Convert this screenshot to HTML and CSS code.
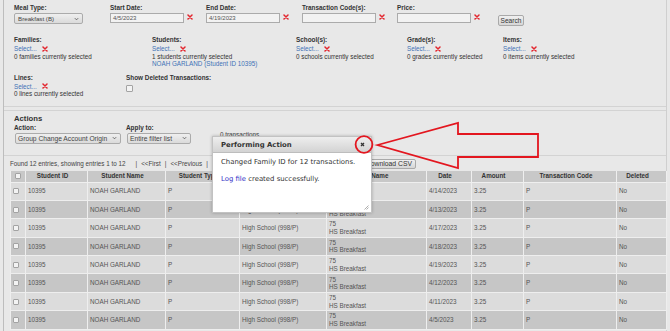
FILE: index.html
```html
<!DOCTYPE html>
<html>
<head>
<meta charset="utf-8">
<title>Transactions</title>
<link rel="stylesheet" href="styles.css">
</head>
<body>
<div class="page">
  <section class="filters">
    <div class="frow frow1">
      <div class="field">
        <div class="lbl">Meal Type:</div>
        <div class="sel sel-meal"><span>Breakfast (B)</span><svg class="chev" viewBox="0 0 6 4"><path d="M1 1l2 2 2-2" fill="none" stroke="#555" stroke-width="1"/></svg></div>
      </div>
      <div class="field">
        <div class="lbl">Start Date:</div>
        <div class="inrow"><div class="inp">4/5/2023</div><svg class="xi" viewBox="0 0 6 6"><path d="M1 1L5 5M5 1L1 5"/></svg></div>
      </div>
      <div class="field">
        <div class="lbl">End Date:</div>
        <div class="inrow"><div class="inp">4/19/2023</div><svg class="xi" viewBox="0 0 6 6"><path d="M1 1L5 5M5 1L1 5"/></svg></div>
      </div>
      <div class="field">
        <div class="lbl">Transaction Code(s):</div>
        <div class="inrow"><div class="inp"></div><svg class="xi" viewBox="0 0 6 6"><path d="M1 1L5 5M5 1L1 5"/></svg></div>
      </div>
      <div class="field">
        <div class="lbl">Price:</div>
        <div class="inrow"><div class="inp"></div><svg class="xi" viewBox="0 0 6 6"><path d="M1 1L5 5M5 1L1 5"/></svg></div>
      </div>
      <div class="field field-search"><button class="btn btn-search">Search</button></div>
    </div>

    <div class="frow frow2">
      <div class="field">
        <div class="lbl">Families:</div>
        <div class="selrow"><span class="link">Select...</span><svg class="xi" viewBox="0 0 6 6"><path d="M1 1L5 5M5 1L1 5"/></svg></div>
        <div class="txt">0 families currently selected</div>
      </div>
      <div class="field">
        <div class="lbl">Students:</div>
        <div class="selrow"><span class="link">Select...</span><svg class="xi" viewBox="0 0 6 6"><path d="M1 1L5 5M5 1L1 5"/></svg></div>
        <div class="txt">1 students currently selected</div>
        <div class="txt txt-link">NOAH GARLAND (Student ID 10395)</div>
      </div>
      <div class="field">
        <div class="lbl">School(s):</div>
        <div class="selrow"><span class="link">Select...</span><svg class="xi" viewBox="0 0 6 6"><path d="M1 1L5 5M5 1L1 5"/></svg></div>
        <div class="txt">0 schools currently selected</div>
      </div>
      <div class="field">
        <div class="lbl">Grade(s):</div>
        <div class="selrow"><span class="link">Select...</span><svg class="xi" viewBox="0 0 6 6"><path d="M1 1L5 5M5 1L1 5"/></svg></div>
        <div class="txt">0 grades currently selected</div>
      </div>
      <div class="field">
        <div class="lbl">Items:</div>
        <div class="selrow"><span class="link">Select...</span><svg class="xi" viewBox="0 0 6 6"><path d="M1 1L5 5M5 1L1 5"/></svg></div>
        <div class="txt">0 items currently selected</div>
      </div>
    </div>

    <div class="frow frow3">
      <div class="field">
        <div class="lbl">Lines:</div>
        <div class="selrow"><span class="link">Select...</span><svg class="xi" viewBox="0 0 6 6"><path d="M1 1L5 5M5 1L1 5"/></svg></div>
        <div class="txt">0 lines currently selected</div>
      </div>
      <div class="field">
        <div class="lbl">Show Deleted Transactions:</div>
        <div class="cbx cbx-deleted"></div>
      </div>
    </div>
  </section>

  <section class="actions">
    <div class="act-title">Actions</div>
    <div class="act-row">
      <div class="field">
        <div class="lbl lbl-act">Action:</div>
        <div class="sel sel-act sel-action"><span>Group Change Account Origin</span><svg class="chev" viewBox="0 0 6 4"><path d="M1 1l2 2 2-2" fill="none" stroke="#555" stroke-width="1"/></svg></div>
      </div>
      <div class="field">
        <div class="lbl lbl-act">Apply to:</div>
        <div class="sel sel-act sel-apply"><span>Entire filter list</span><svg class="chev" viewBox="0 0 6 4"><path d="M1 1l2 2 2-2" fill="none" stroke="#555" stroke-width="1"/></svg></div>
      </div>
      <div class="field field-count">0 transactions</div>
    </div>
  </section>

  <div class="pager">
    <span>Found 12 entries, showing entries 1 to 12</span>
    <span class="sep sep-first">|</span>
    <span>&lt;&lt;First</span>
    <span class="sep">|</span>
    <span>&lt;&lt;Previous</span>
    <span class="sep">|</span>
    <button class="btn btn-csv">Download CSV</button>
  </div>

  <table class="grid">
    <colgroup>
      <col class="c-cb"><col class="c-id"><col class="c-name"><col class="c-type"><col class="c-school"><col class="c-item"><col class="c-date"><col class="c-amt"><col class="c-code"><col class="c-del">
    </colgroup>
    <thead>
      <tr><th class="th-cb"><div class="cbx"></div></th><th>Student ID</th><th>Student Name</th><th>Student Type</th><th>School</th><th>Item Name</th><th>Date</th><th>Amount</th><th>Transaction Code</th><th>Deleted</th></tr>
    </thead>
    <tbody>
      <tr class="r-odd"><td><div class="cbx"></div></td><td>10395</td><td>NOAH GARLAND</td><td>P</td><td>High School (998/P)</td><td>75<br>HS Breakfast</td><td>4/14/2023</td><td>3.25</td><td>P</td><td>No</td></tr>
      <tr class="r-even"><td><div class="cbx"></div></td><td>10395</td><td>NOAH GARLAND</td><td>P</td><td>High School (998/P)</td><td>75<br>HS Breakfast</td><td>4/13/2023</td><td>3.25</td><td>P</td><td>No</td></tr>
      <tr class="r-odd"><td><div class="cbx"></div></td><td>10395</td><td>NOAH GARLAND</td><td>P</td><td>High School (998/P)</td><td>75<br>HS Breakfast</td><td>4/17/2023</td><td>3.25</td><td>P</td><td>No</td></tr>
      <tr class="r-even"><td><div class="cbx"></div></td><td>10395</td><td>NOAH GARLAND</td><td>P</td><td>High School (998/P)</td><td>75<br>HS Breakfast</td><td>4/18/2023</td><td>3.25</td><td>P</td><td>No</td></tr>
      <tr class="r-odd"><td><div class="cbx"></div></td><td>10395</td><td>NOAH GARLAND</td><td>P</td><td>High School (998/P)</td><td>75<br>HS Breakfast</td><td>4/19/2023</td><td>3.25</td><td>P</td><td>No</td></tr>
      <tr class="r-even"><td><div class="cbx"></div></td><td>10395</td><td>NOAH GARLAND</td><td>P</td><td>High School (998/P)</td><td>75<br>HS Breakfast</td><td>4/12/2023</td><td>3.25</td><td>P</td><td>No</td></tr>
      <tr class="r-odd"><td><div class="cbx"></div></td><td>10395</td><td>NOAH GARLAND</td><td>P</td><td>High School (998/P)</td><td>75<br>HS Breakfast</td><td>4/11/2023</td><td>3.25</td><td>P</td><td>No</td></tr>
      <tr class="r-even"><td><div class="cbx"></div></td><td>10395</td><td>NOAH GARLAND</td><td>P</td><td>High School (998/P)</td><td>75<br>HS Breakfast</td><td>4/5/2023</td><td>3.25</td><td>P</td><td>No</td></tr>
    </tbody>
  </table>
</div>

<div class="dialog">
  <div class="dlg-title">
    <span>Performing Action</span>
    <svg class="dlg-close" viewBox="0 0 5 5"><path d="M1 1L4 4M4 1L1 4"/></svg>
  </div>
  <div class="dlg-body">
    <p class="dlg-line1">Changed Family ID for 12 transactions.</p>
    <p class="dlg-line2"><span class="dlg-link">Log file</span> created successfully.</p>
  </div>
  <svg class="dlg-grip" viewBox="0 0 6 6"><path d="M5.5 1.5L1.5 5.5M5.5 3.5L3.5 5.5"/></svg>
</div>

<svg class="annot" viewBox="0 0 670 331" width="670" height="331">
  <circle cx="364" cy="144.5" r="8.4"/>
  <polygon points="377.5,145 458,123 458,134 538,134 538,157 458,157 458,168"/>
</svg>
</body>
</html>
```

FILE: styles.css
```css
* { box-sizing: border-box; }

html, body {
  margin: 0;
  padding: 0;
  height: 100%;
  overflow: hidden;
}

body {
  position: relative;
  background: #e8e8e8;
  font-family: "Liberation Sans", Arial, sans-serif;
  font-size: 6.3px;
  color: #333;
}

.page {
  margin-left: 3px;
  width: 664px;
  min-height: 100%;
  border-left: 1px solid #bdbdbd;
  border-right: 1px solid #cfcfcf;
}

/* ---------- filters ---------- */
.filters {
  height: 107px;
  padding: 4px 0 0 10px;
  border-bottom: 1px solid #d3d3d3;
}

.frow { display: grid; align-items: start; }
.frow1 { grid-template-columns: 96px 96px 96px 95px 101px auto; }
.frow2 { grid-template-columns: 138px 144px 111px 96px auto; margin-top: 10px; }
.frow3 { grid-template-columns: 112px auto; margin-top: 6px; }

.lbl {
  font-weight: bold;
  font-size: 6.4px;
  line-height: 8px;
  color: #333;
  white-space: nowrap;
}

.inrow {
  display: flex;
  align-items: flex-start;
  gap: 3px;
  margin-top: 1px;
}

.inp {
  width: 74px;
  height: 10px;
  border: 1px solid #ababab;
  background: #f2f2f2;
  font-size: 6px;
  line-height: 8px;
  padding-left: 2px;
  color: #555;
}

.xi {
  width: 6px;
  height: 6px;
  flex: none;
  fill: none;
  stroke: #e3262e;
  stroke-width: 1.5;
  stroke-linecap: round;
}
.inrow .xi { margin-top: 1px; }

.sel {
  display: flex;
  align-items: center;
  justify-content: space-between;
  height: 11px;
  margin-top: 1px;
  padding: 0 3px 0 3px;
  border: 1px solid #ababab;
  border-radius: 2px;
  background: linear-gradient(#efefef, #dadada);
  color: #444;
  font-size: 6.2px;
  white-space: nowrap;
}
.sel-meal { width: 69px; }
.chev { width: 5px; height: 4px; flex: none; }

.field-search { padding-top: 11px; }

.btn {
  font-family: "Liberation Sans", Arial, sans-serif;
  color: #333;
  border: 1px solid #a9a9a9;
  border-radius: 2px;
  background: linear-gradient(#f0f0f0, #d6d6d6);
  padding: 0;
  margin: 0;
  cursor: pointer;
}
.btn-search {
  width: 26px;
  height: 11px;
  font-size: 6.6px;
  line-height: 9px;
}

.selrow {
  display: flex;
  align-items: center;
  gap: 5px;
  height: 8px;
  margin-top: 0.5px;
}

.link { color: #3d72b6; }

.txt {
  line-height: 7.7px;
  white-space: nowrap;
  color: #333;
}
.txt-link { color: #3d72b6; }

.cbx {
  width: 6px;
  height: 6px;
  border: 1px solid #a3a3a3;
  border-radius: 1px;
  background: #f3f3f3;
}
.cbx-deleted { width: 7px; height: 7px; margin-top: 3px; }

/* ---------- actions ---------- */
.actions {
  height: 46px;
  margin-top: 3px;
  padding: 3px 0 0 10px;
  border-top: 1px solid #d3d3d3;
  border-bottom: 1px solid #d3d3d3;
}

.act-title {
  font-weight: bold;
  font-size: 7.7px;
  line-height: 9px;
  color: #333;
}

.act-row {
  display: grid;
  grid-template-columns: 112px 94px auto;
  align-items: start;
}

.lbl-act { line-height: 9.5px; }

.sel-act {
  margin-top: 0;
  font-size: 6.7px;
  padding: 0 3px 0 2px;
}
.sel-action { width: 106px; margin-left: 1px; }
.sel-apply { width: 64px; margin-left: 1px; }

.field-count {
  padding-top: 8px;
  line-height: 8px;
  color: #444;
}

/* ---------- pager ---------- */
.pager {
  display: flex;
  align-items: center;
  gap: 4px;
  height: 15px;
  padding-left: 6px;
  color: #444;
  white-space: nowrap;
}
.sep-first { margin-left: 6px; }

.btn-csv {
  margin-left: 150px;
  height: 10px;
  padding: 0 3px;
  font-size: 6.8px;
  line-height: 8px;
}

/* ---------- grid ---------- */
.grid {
  margin-left: 6px;
  width: 656px;
  table-layout: fixed;
  border-collapse: collapse;
}

.c-cb { width: 15px; }
.c-id { width: 62px; }
.c-name { width: 78px; }
.c-type { width: 74px; }
.c-school { width: 87px; }
.c-item { width: 100px; }
.c-date { width: 45px; }
.c-amt { width: 52px; }
.c-code { width: 93px; }
.c-del { width: 50px; }

.grid th {
  height: 11px;
  padding: 0 8px 0 0;
  background: #c8c8c8;
  border: 1px solid #efefef;
  border-top: none;
  font-weight: bold;
  font-size: 6.3px;
  line-height: 8px;
  color: #333;
  text-align: center;
  white-space: nowrap;
  overflow: hidden;
}
.grid th.th-cb { padding: 0 0 0 4px; }

.grid tbody tr { height: 18.4px; }

.grid td {
  padding: 0 2px;
  border: 1px solid #eeeeee;
  line-height: 7.5px;
  color: #555;
  white-space: nowrap;
  overflow: hidden;
  vertical-align: middle;
}

.r-odd td { background: #dcdcdc; }
.r-even td { background: #c6c6c6; }

/* ---------- dialog overlay ---------- */
.dialog {
  position: absolute;
  left: 212px;
  top: 136px;
  width: 160px;
  height: 77px;
  background: #fff;
  border: 1px solid #c2c2c2;
  box-shadow: 0 0 3px rgba(0, 0, 0, 0.25);
  font-family: "DejaVu Sans", Verdana, sans-serif;
  font-size: 6.9px;
  color: #333;
}

.dlg-title {
  display: flex;
  align-items: center;
  justify-content: space-between;
  height: 16px;
  padding: 0 6px 0 8px;
  background: linear-gradient(#eeeeee, #d3d3d3);
  border-bottom: 1px solid #bdbdbd;
  font-weight: bold;
  color: #333;
}

.dlg-close {
  width: 5px;
  height: 5px;
  fill: none;
  stroke: #333;
  stroke-width: 1.3;
}

.dlg-body { padding: 0 8px; }
.dlg-body p { margin: 0; line-height: 8px; white-space: nowrap; }
.dlg-line1 { margin-top: 5px !important; }
.dlg-line2 { margin-top: 9px !important; }
.dlg-link { color: #3434c8; }

.dlg-grip {
  position: absolute;
  right: 2px;
  bottom: 2px;
  width: 6px;
  height: 6px;
  fill: none;
  stroke: #999;
  stroke-width: 0.8;
}

.annot {
  position: absolute;
  left: 0;
  top: 0;
  pointer-events: none;
  fill: none;
  stroke: #e3161f;
  stroke-width: 1.8;
}
```
